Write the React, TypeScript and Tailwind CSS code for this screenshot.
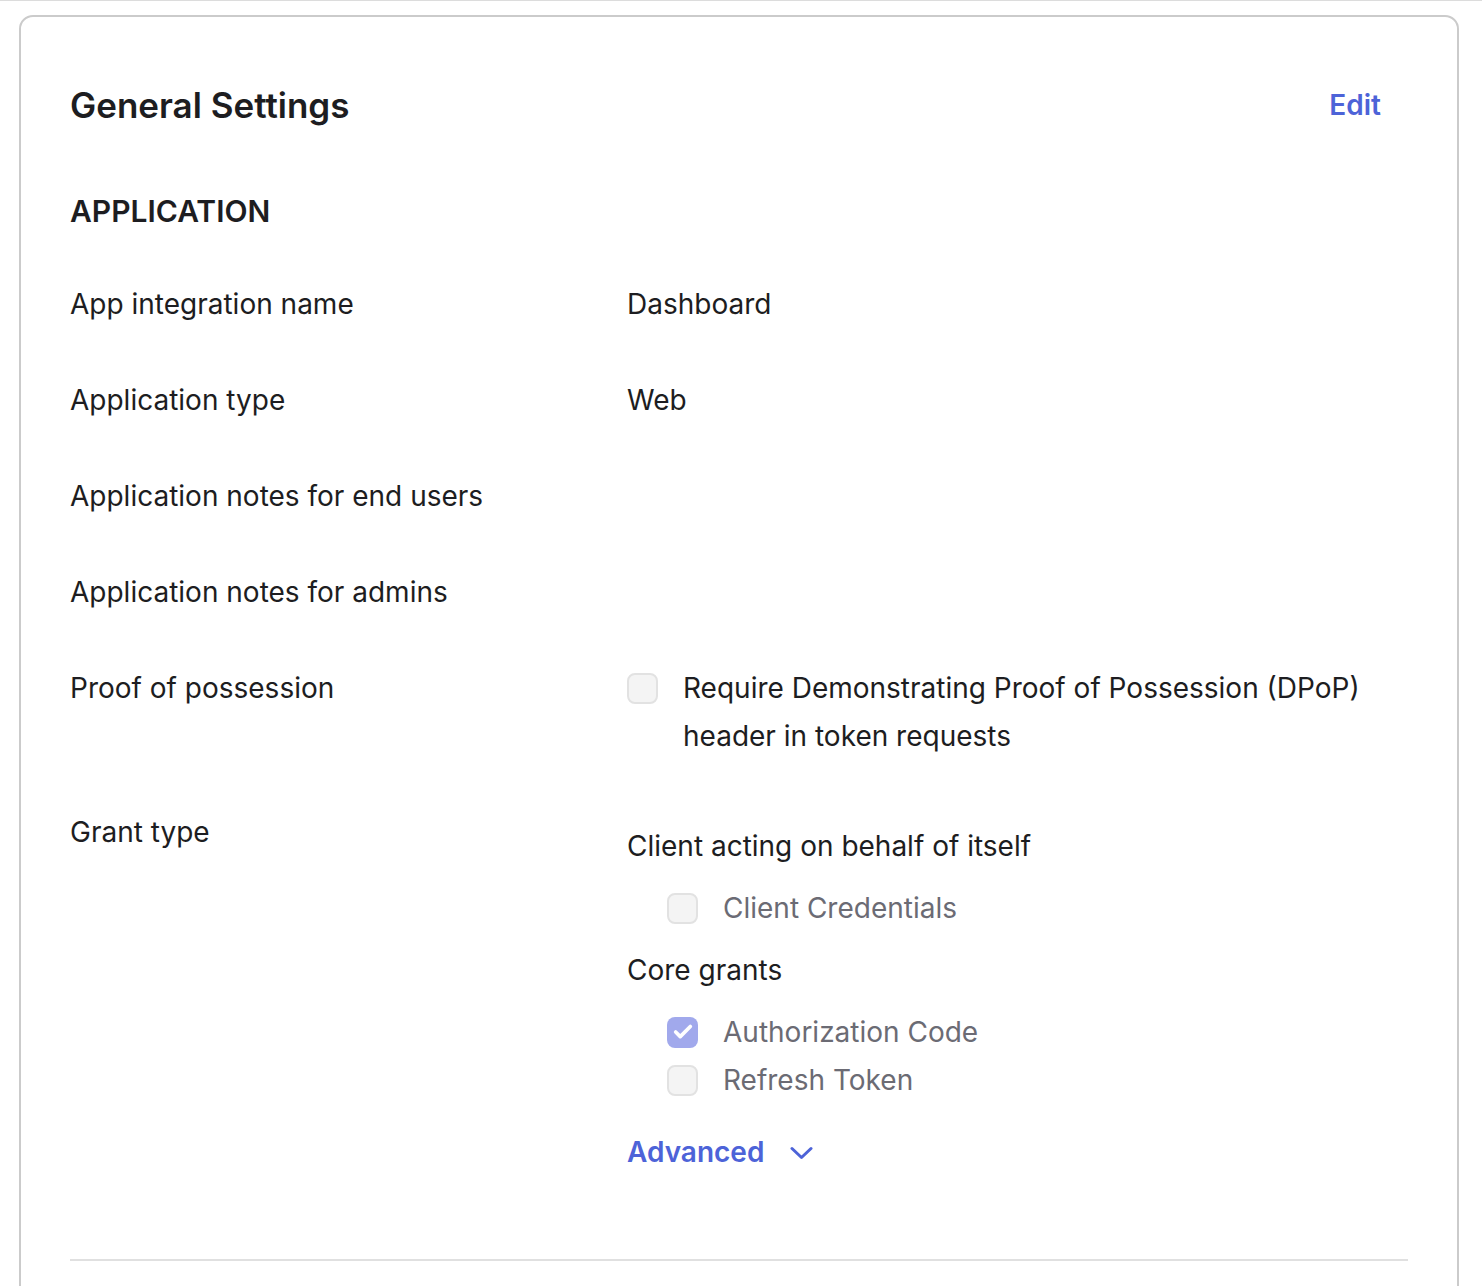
import { Check } from 'lucide-react';

const ROWS = [
  { label: 'App integration name', value: 'Dashboard' },
  { label: 'Application type', value: 'Web' },
  { label: 'Application notes for end users', value: '' },
  { label: 'Application notes for admins', value: '' },
];

function Box({ checked = false }: { checked?: boolean }) {
  if (checked) {
    return (
      <span className="flex items-center justify-center w-[31px] h-[31px] shrink-0 rounded-[8px] bg-[#a1a9ec]">
        <Check className="w-[22px] h-[22px] text-white" strokeWidth={4} />
      </span>
    );
  }
  return <span className="block w-[31px] h-[31px] shrink-0 rounded-[8px] bg-[#f4f4f4] border-2 border-[#e2e2e2]" />;
}

export default function App() {
  return (
    <div className="min-h-screen bg-white border-t border-[#dcdcdc] pt-[14px] font-['Inter',sans-serif] text-[#1d1d21] overflow-hidden">
      <div className="ml-[19px] w-[1440px] h-[1400px] border-2 border-[#cbcbcb] rounded-[14px] px-[49px] pt-[60px]">
        <div className="flex items-center justify-between">
          <h1 className="text-[35px] font-semibold leading-[56px]">General Settings</h1>
          <button className="text-[28px] font-semibold text-[#4d63d8] mr-[27px]">Edit</button>
        </div>

        <h2 className="mt-[54px] text-[30px] font-semibold leading-[48px]">APPLICATION</h2>

        <div className="mt-[45px] grid grid-cols-[557px_1fr] gap-y-[48px] text-[28px] leading-[48px]">
          {ROWS.map(r => (
            <div key={r.label} className="contents">
              <div>{r.label}</div>
              <div>{r.value}</div>
            </div>
          ))}

          <div>Proof of possession</div>
          <div className="flex gap-[25px]">
            <div className="pt-[9px]"><Box /></div>
            <div>Require Demonstrating Proof of Possession (DPoP)<br />header in token requests</div>
          </div>

          <div>Grant type</div>
          <div className="pt-[14px]">
            <div>Client acting on behalf of itself</div>
            <div className="mt-[14px] ml-[40px] flex items-center gap-[25px] text-[#6b6b74]">
              <Box />
              <span>Client Credentials</span>
            </div>
            <div className="mt-[14px]">Core grants</div>
            <div className="mt-[14px] ml-[40px] flex items-center gap-[25px] text-[#6b6b74]">
              <Box checked />
              <span>Authorization Code</span>
            </div>
            <div className="ml-[40px] flex items-center gap-[25px] text-[#6b6b74]">
              <Box />
              <span>Refresh Token</span>
            </div>
            <button className="mt-[24px] flex items-center gap-[26px] text-[#4d63d8] font-semibold">
              <span>Advanced</span>
              <svg width="23" height="14" viewBox="0 0 23 14" fill="none" className="mt-[2px]">
                <path d="M2 2.5 L11.5 11.5 L21 2.5" stroke="currentColor" strokeWidth="3" strokeLinecap="round" strokeLinejoin="round" />
              </svg>
            </button>
          </div>
        </div>

        <div className="mt-[83px] h-[2px] bg-[#e0e0e0]" />
      </div>
    </div>
  );
}
